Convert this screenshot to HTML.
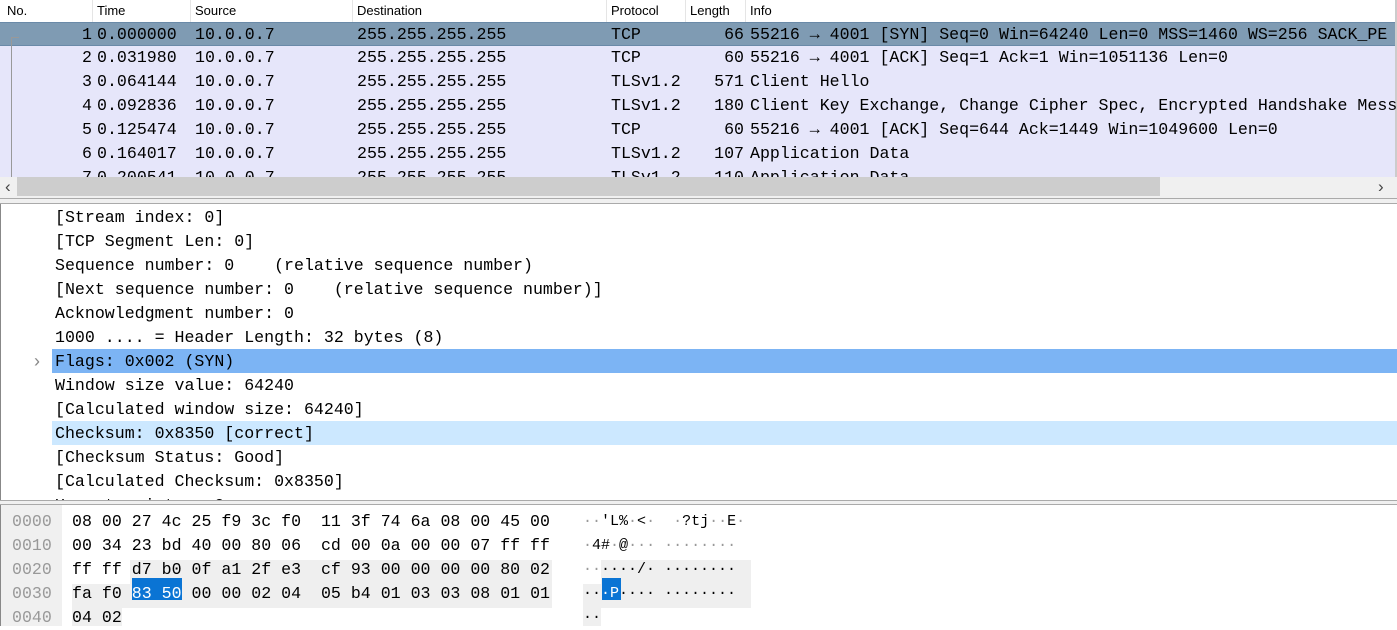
<!DOCTYPE html>
<html><head><meta charset="utf-8"><style>
*{margin:0;padding:0;box-sizing:border-box}
body{width:1397px;height:626px;overflow:hidden;background:#fff;position:relative;font-family:"Liberation Mono",monospace;font-size:16.6px;color:#000}
.a{position:absolute;white-space:pre}
.hdr{position:absolute;left:0;top:0;width:1397px;height:22px;background:#fff;font-family:"Liberation Sans",sans-serif;font-size:13px;color:#000}
.hdr span{position:absolute;top:3px}
.hdr i{position:absolute;top:0;width:1px;height:22px;background:#e5e5e5}
.row{position:absolute;left:0;width:1395px;height:24px;background:#e6e6fa}
.row span{position:absolute;top:2px;white-space:pre}
.r{text-align:right}
.d{position:absolute;left:52px;width:1345px;height:24px;padding-left:3px;line-height:25px;white-space:pre}
.h{position:absolute;height:24px;line-height:24px;white-space:pre}
</style></head><body>
<div class="hdr">
<span style="left:7px">No.</span><i style="left:92px"></i>
<span style="left:97px">Time</span><i style="left:190px"></i>
<span style="left:195px">Source</span><i style="left:352px"></i>
<span style="left:357px">Destination</span><i style="left:606px"></i>
<span style="left:611px">Protocol</span><i style="left:685px"></i>
<span style="left:690px">Length</span><i style="left:745px"></i>
<span style="left:750px">Info</span>
</div>
<div style="position:absolute;left:0;top:22px;width:1px;height:155px;background:#888"></div>
<div style="position:absolute;left:1395px;top:0;width:2px;height:177px;background:#ccc"></div>

<div class="row" style="top:22px;background:#7f9bb3;border-top:1px solid #6a8aa8;border-bottom:1px solid #6a8aa8"><span style="left:60px;width:32px" class="r">1</span><span style="left:97px">0.000000</span><span style="left:195px">10.0.0.7</span><span style="left:357px">255.255.255.255</span><span style="left:611px">TCP</span><span style="left:690px;width:54px" class="r">66</span><span style="left:750px">55216 → 4001 [SYN] Seq=0 Win=64240 Len=0 MSS=1460 WS=256 SACK_PE</span></div>
<div class="row" style="top:46px"><span style="left:60px;width:32px" class="r">2</span><span style="left:97px">0.031980</span><span style="left:195px">10.0.0.7</span><span style="left:357px">255.255.255.255</span><span style="left:611px">TCP</span><span style="left:690px;width:54px" class="r">60</span><span style="left:750px">55216 → 4001 [ACK] Seq=1 Ack=1 Win=1051136 Len=0</span></div>
<div class="row" style="top:70px"><span style="left:60px;width:32px" class="r">3</span><span style="left:97px">0.064144</span><span style="left:195px">10.0.0.7</span><span style="left:357px">255.255.255.255</span><span style="left:611px">TLSv1.2</span><span style="left:690px;width:54px" class="r">571</span><span style="left:750px">Client Hello</span></div>
<div class="row" style="top:94px"><span style="left:60px;width:32px" class="r">4</span><span style="left:97px">0.092836</span><span style="left:195px">10.0.0.7</span><span style="left:357px">255.255.255.255</span><span style="left:611px">TLSv1.2</span><span style="left:690px;width:54px" class="r">180</span><span style="left:750px">Client Key Exchange, Change Cipher Spec, Encrypted Handshake Mess</span></div>
<div class="row" style="top:118px"><span style="left:60px;width:32px" class="r">5</span><span style="left:97px">0.125474</span><span style="left:195px">10.0.0.7</span><span style="left:357px">255.255.255.255</span><span style="left:611px">TCP</span><span style="left:690px;width:54px" class="r">60</span><span style="left:750px">55216 → 4001 [ACK] Seq=644 Ack=1449 Win=1049600 Len=0</span></div>
<div class="row" style="top:142px"><span style="left:60px;width:32px" class="r">6</span><span style="left:97px">0.164017</span><span style="left:195px">10.0.0.7</span><span style="left:357px">255.255.255.255</span><span style="left:611px">TLSv1.2</span><span style="left:690px;width:54px" class="r">107</span><span style="left:750px">Application Data</span></div>
<div class="row" style="top:166px;height:11px;overflow:hidden"><span style="left:60px;width:32px" class="r">7</span><span style="left:97px">0.200541</span><span style="left:195px">10.0.0.7</span><span style="left:357px">255.255.255.255</span><span style="left:611px">TLSv1.2</span><span style="left:690px;width:54px" class="r">110</span><span style="left:750px">Application Data</span></div>
<div style="position:absolute;left:11px;top:37px;width:1px;height:140px;background:#999"></div>
<div style="position:absolute;left:11px;top:37px;width:8px;height:1px;background:#999"></div>

<div style="position:absolute;left:0;top:177px;width:1397px;height:21px;background:#f0f0f0"></div>
<div style="position:absolute;left:17px;top:177px;width:1143px;height:19px;background:#cdcdcd"></div>
<div class="a" style="left:5px;top:177px;font-family:'Liberation Sans',sans-serif;font-size:17px;color:#444">‹</div>
<div class="a" style="left:1378px;top:177px;font-family:'Liberation Sans',sans-serif;font-size:17px;color:#444">›</div>
<div style="position:absolute;left:0;top:198px;width:1397px;height:6px;background:#f0f0f0;border-top:1px solid #aaa;border-bottom:1px solid #aaa"></div>
<div style="position:absolute;left:0;top:204px;width:1px;height:296px;background:#888"></div>

<div class="d" style="top:205px">[Stream index: 0]</div>
<div class="d" style="top:229px">[TCP Segment Len: 0]</div>
<div class="d" style="top:253px">Sequence number: 0    (relative sequence number)</div>
<div class="d" style="top:277px">[Next sequence number: 0    (relative sequence number)]</div>
<div class="d" style="top:301px">Acknowledgment number: 0</div>
<div class="d" style="top:325px">1000 .... = Header Length: 32 bytes (8)</div>
<div class="d" style="top:349px;background:#7cb4f4">Flags: 0x002 (SYN)</div>
<div class="a" style="left:34px;top:349px;line-height:24px;color:#888;font-family:'Liberation Sans',sans-serif;font-size:18px">›</div>
<div class="d" style="top:373px">Window size value: 64240</div>
<div class="d" style="top:397px">[Calculated window size: 64240]</div>
<div class="d" style="top:421px;background:#cce8ff">Checksum: 0x8350 [correct]</div>
<div class="d" style="top:445px">[Checksum Status: Good]</div>
<div class="d" style="top:469px">[Calculated Checksum: 0x8350]</div>
<div class="d" style="top:493px;height:8px;overflow:hidden">Urgent pointer: 0</div>
<div style="position:absolute;left:0;top:500px;width:1397px;height:5px;background:#f0f0f0;border-top:1px solid #aaa;border-bottom:1px solid #aaa"></div>

<div style="position:absolute;left:0;top:505px;width:62px;height:121px;background:#f0f0f0"></div>
<div style="position:absolute;left:0;top:505px;width:1px;height:121px;background:#888"></div>
<div style="position:absolute;left:130px;top:560px;width:422px;height:24px;background:#efefef"></div>
<div style="position:absolute;left:72px;top:584px;width:480px;height:24px;background:#efefef"></div>
<div style="position:absolute;left:72px;top:608px;width:50px;height:18px;background:#efefef"></div>
<div style="position:absolute;left:601px;top:560px;width:150px;height:24px;background:#efefef"></div>
<div style="position:absolute;left:583px;top:584px;width:168px;height:24px;background:#efefef"></div>
<div style="position:absolute;left:583px;top:608px;width:18px;height:18px;background:#efefef"></div>
<div style="position:absolute;left:132px;top:578px;width:50px;height:22px;background:#0a74d4"></div>
<div style="position:absolute;left:602px;top:578px;width:19px;height:22px;background:#0a74d4"></div>

<div class="h" style="left:12px;top:510px;color:#999">0000</div>
<div class="h" style="left:12px;top:534px;color:#999">0010</div>
<div class="h" style="left:12px;top:558px;color:#999">0020</div>
<div class="h" style="left:12px;top:582px;color:#999">0030</div>
<div class="h" style="left:12px;top:606px;color:#999">0040</div>
<div class="h" style="left:72px;top:510px">08 00 27 4c 25 f9 3c f0  11 3f 74 6a 08 00 45 00</div>
<div class="h" style="left:72px;top:534px">00 34 23 bd 40 00 80 06  cd 00 0a 00 00 07 ff ff</div>
<div class="h" style="left:72px;top:558px">ff ff d7 b0 0f a1 2f e3  cf 93 00 00 00 00 80 02</div>
<div class="h" style="left:72px;top:582px">fa f0 <span style="color:#fff">83 50</span> 00 00 02 04  05 b4 01 03 03 08 01 01</div>
<div class="h" style="left:72px;top:606px">04 02</div>
<div class="h" style="left:583px;top:510px;font-size:15px"><span style="color:#999">··</span>'L%<span style="color:#999">·</span>&lt;<span style="color:#999">·</span>  <span style="color:#999">·</span>?tj<span style="color:#999">··</span>E<span style="color:#999">·</span></div>
<div class="h" style="left:583px;top:534px;font-size:15px"><span style="color:#999">·</span>4#<span style="color:#999">·</span>@<span style="color:#999">···</span> <span style="color:#999">········</span></div>
<div class="h" style="left:583px;top:558px;font-size:15px"><span style="color:#999">··</span>····/· ········</div>
<div class="h" style="left:583px;top:582px;font-size:15px">··<span style="color:#fff">·P</span>···· ········</div>
<div class="h" style="left:583px;top:606px;font-size:15px">··</div>
</body></html>
